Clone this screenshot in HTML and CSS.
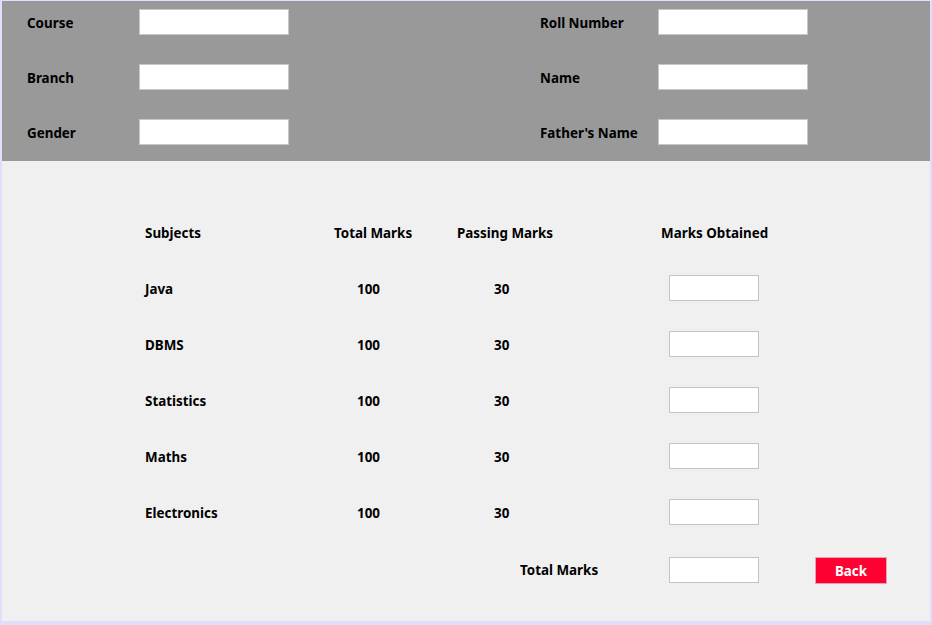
FILE: index.html
```html
<!DOCTYPE html>
<html>
<head>
<meta charset="utf-8">
<link rel="stylesheet" href="styles.css">
</head>
<body>
<div class="window">
  <div class="header">
    <div class="group">
      <span class="label">Course</span><input class="field" type="text">
      <span class="label">Branch</span><input class="field" type="text">
      <span class="label">Gender</span><input class="field" type="text">
    </div>
    <div class="group group-right">
      <span class="label">Roll Number</span><input class="field" type="text">
      <span class="label">Name</span><input class="field" type="text">
      <span class="label">Father's Name</span><input class="field" type="text">
    </div>
  </div>
  <div class="main">
    <div class="marks">
      <span class="c1">Subjects</span><span class="c2">Total Marks</span><span class="c3">Passing Marks</span><span class="c4">Marks Obtained</span><span></span>

      <span class="c1">Java</span><span class="c2 val">100</span><span class="c3 val">30</span><input class="small" type="text"><span></span>
      <span class="c1">DBMS</span><span class="c2 val">100</span><span class="c3 val">30</span><input class="small" type="text"><span></span>
      <span class="c1">Statistics</span><span class="c2 val">100</span><span class="c3 val">30</span><input class="small" type="text"><span></span>
      <span class="c1">Maths</span><span class="c2 val">100</span><span class="c3 val">30</span><input class="small" type="text"><span></span>
      <span class="c1">Electronics</span><span class="c2 val">100</span><span class="c3 val">30</span><input class="small" type="text"><span></span>

      <span></span><span></span><span class="c3 total">Total Marks</span><input class="small small-total" type="text"><button class="back">Back</button>
    </div>
  </div>
</div>
</body>
</html>
```
FILE: styles.css
```css
* { box-sizing: border-box; }
html, body { margin: 0; padding: 0; }
body {
  background: #dfdffc;
  width: 932px;
  height: 625px;
  overflow: hidden;
  font-family: "Noto Sans", "DejaVu Sans", sans-serif;
  font-weight: bold;
  font-size: 13.4px;
  color: #000;
}
.window {
  margin: 1px 2px 4px 2px;
  height: 620px;
  display: flex;
  flex-direction: column;
}
.header {
  height: 160px;
  background: #999999;
  display: flex;
  padding: 8px 0 0 25px;
}
.group {
  display: grid;
  grid-template-columns: 112px 150px;
  grid-auto-rows: 26px;
  row-gap: 29px;
  align-items: center;
}
.group-right {
  margin-left: 251px;
  grid-template-columns: 118px 150px;
}
.label { white-space: nowrap; padding-top: 2px; }
.field {
  width: 150px;
  height: 26px;
  border: 1px solid #c6c6c6;
  background: #fff;
  margin: 0;
  padding: 0;
}
.main {
  flex: 1;
  background: #f0f0f0;
}
.marks {
  display: grid;
  grid-template-columns: 189px 123px 204px 154px 72px;
  grid-auto-rows: 56px;
  align-items: center;
  padding: 44px 0 0 143px;
  white-space: nowrap;
}
.marks .c2.val { padding-left: 23px; }
.marks .c3.val { padding-left: 37px; }
.marks .total { padding-left: 63px; padding-top: 2px; }
.small {
  align-self: start;
  width: 90px;
  height: 26px;
  margin: 14px 0 0 8px;
  padding: 0;
  border: 1px solid #c4c4c4;
  background: #fff;
}
.small-total { margin-top: 16px; }
.back {
  align-self: start;
  width: 72px;
  height: 27px;
  margin: 16px 0 0 0;
  padding: 0;
  background: #ff0033;
  border: 1px solid #e6a3b4;
  color: #fff;
  font-family: inherit;
  font-weight: bold;
  font-size: 13.4px;
}
```
